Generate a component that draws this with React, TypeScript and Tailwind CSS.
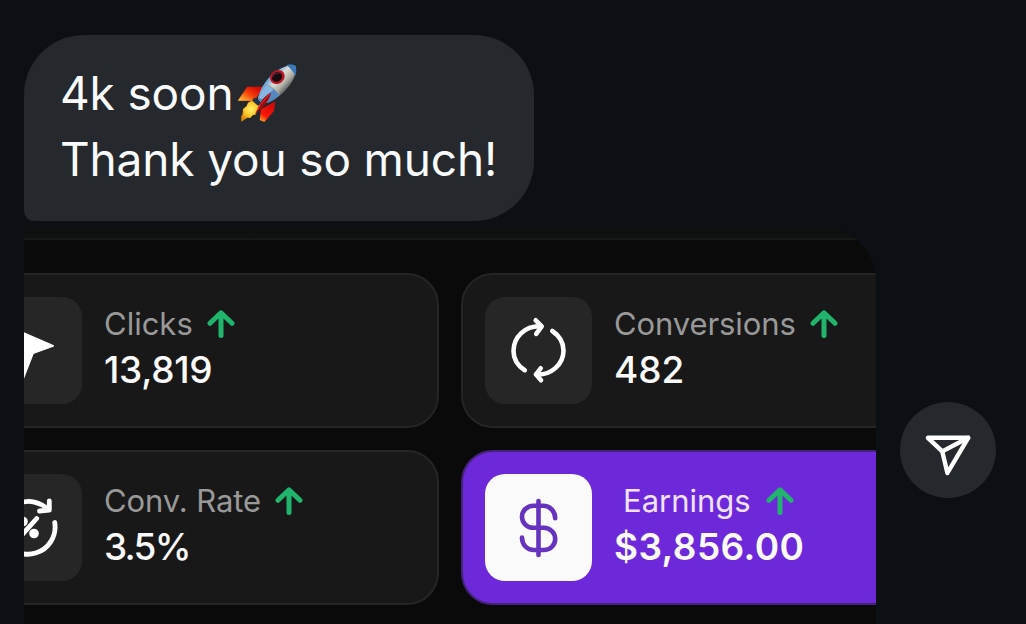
import type { ReactNode } from "react";
import clsx from "clsx";

type StatCardProps = {
  label: string;
  value: string;
  icon: ReactNode;
  labelClass?: string;
  valueClass?: string;
  highlight?: boolean;
};

const ArrowUp = () => (
  <svg width="28" height="28" viewBox="0 0 28 28" fill="none" className="shrink-0">
    <path
      d="M14 25.5V3M3 13.3L14 2.8L25 13.3"
      stroke="#20b46c"
      strokeWidth="5"
      strokeLinecap="round"
      strokeLinejoin="round"
    />
  </svg>
);

const CursorIcon = () => (
  <svg width="107" height="107" viewBox="0 0 107 107">
    <path
      d="M30 28L78 48.8L58 56L47 84Z"
      fill="#fff"
      stroke="#fff"
      strokeWidth="2"
      strokeLinejoin="round"
    />
  </svg>
);

const ConversionIcon = () => (
  <svg
    width="107"
    height="107"
    viewBox="0 0 107 107"
    fill="none"
    stroke="#fff"
    strokeWidth="4.6"
    strokeLinecap="round"
    strokeLinejoin="round"
  >
    <path d="M56 29.3C40 28.5 28.5 40 28.5 54C28.5 62 33 69 39.8 73.2" />
    <path d="M50.7 23.3L56.7 29.3L51.2 36.8" />
    <path d="M67.3 34C74 38.5 78.5 45.5 78.5 53.5C78.5 67.5 66 78.5 51 77.5" />
    <path d="M55.7 71.3L51 77.3L56 83.3" />
  </svg>
);

const RateIcon = () => (
  <svg
    width="107"
    height="107"
    viewBox="0 0 107 107"
    fill="none"
    stroke="#fff"
    strokeWidth="4.8"
    strokeLinecap="round"
    strokeLinejoin="round"
  >
    <path d="M26.5 53.5A27.2 27.2 0 0 1 73 35.5" />
    <path d="M74.3 27V36.2L64.5 37" />
    <path d="M79.7 48.5A27.2 27.2 0 0 1 28 64" />
    <path d="M61.7 44.5L45.5 62.5" />
    <circle cx="59" cy="59.5" r="4.8" fill="#fff" stroke="none" />
    <circle cx="48" cy="47.5" r="4.8" fill="#fff" stroke="none" />
  </svg>
);

const DollarIcon = () => (
  <svg
    width="107"
    height="107"
    viewBox="0 0 107 107"
    fill="none"
    stroke="#6633bf"
    strokeWidth="4.6"
    strokeLinecap="round"
  >
    <path d="M53.5 27V81" />
    <path d="M70.2 44.3C70.2 37 64.8 31.8 58 31.8H48.5C42 31.8 37 36.6 37 42.7C37 48.8 42 53.8 48.5 53.8H58.7C65.2 53.8 70.2 58.8 70.2 65C70.2 71.2 65.2 76 58.7 76H49C42 76 37 70.8 37 63.5" />
  </svg>
);

const SendIcon = () => (
  <svg
    width="48"
    height="48"
    viewBox="0 0 48 48"
    fill="none"
    stroke="#fff"
    strokeWidth="4.4"
    strokeLinejoin="round"
    strokeLinecap="round"
    className="overflow-visible"
  >
    <path d="M3.9 11.8H44.2L23.4 47L18.3 25.4Z" />
    <path d="M18.3 25.4L44.2 11.8" />
  </svg>
);

const Rocket = () => (
  <svg width="60" height="58" viewBox="36 27 180 174" className="shrink-0">
    <defs>
      <linearGradient id="body" x1="116" y1="62" x2="172" y2="114" gradientUnits="userSpaceOnUse">
        <stop offset="0" stopColor="#356da8" />
        <stop offset="0.3" stopColor="#82b4e0" />
        <stop offset="0.5" stopColor="#dcdcd5" />
        <stop offset="0.78" stopColor="#b3b2a9" />
        <stop offset="1" stopColor="#65686a" />
      </linearGradient>
      <linearGradient id="fin" x1="88" y1="96" x2="58" y2="142" gradientUnits="userSpaceOnUse">
        <stop offset="0" stopColor="#d90c05" />
        <stop offset="0.45" stopColor="#f53d08" />
        <stop offset="1" stopColor="#ffb52e" />
      </linearGradient>
      <linearGradient id="finRight" x1="145" y1="145" x2="110" y2="198" gradientUnits="userSpaceOnUse">
        <stop offset="0" stopColor="#c90909" />
        <stop offset="0.7" stopColor="#fb1607" />
        <stop offset="1" stopColor="#f99a20" />
      </linearGradient>
      <radialGradient id="flame" cx="78" cy="163" r="36" gradientUnits="userSpaceOnUse">
        <stop offset="0" stopColor="#fff36b" />
        <stop offset="0.55" stopColor="#fbc72b" />
        <stop offset="1" stopColor="#d98208" />
      </radialGradient>
    </defs>
    <path d="M67 95L116 95L88 138L38 137Z" fill="url(#fin)" />
    <path d="M108 163L151 139L147 168L118 201L104 195Z" fill="url(#finRight)" />
    <path
      d="M80 137L103 146L106 157L91 179L84 180L76 189L67 188L49 200L48 185L53 177L54 162L65 153L69 143Z"
      fill="url(#flame)"
    />
    <path d="M88 127L109 145L99 152L82 137Z" fill="#20324b" />
    <path
      d="M212 33C216 52 205 82 184 103C167 122 141 142 120 145C109 144 100 137 99 130C106 98 127 68 154 48C175 34 194 28 212 33Z"
      fill="url(#body)"
    />
    <path d="M184 30C199 27 209 29 212 33C215 41 214 54 211 63C206 51 197 39 184 30Z" fill="#3979ba" />
    <path d="M125 87C138 93 154 105 165 119C151 132 134 143 120 145C109 144 100 137 99 130C104 114 113 98 125 87Z" fill="#5487bd" />
    <path d="M124 90C139 94 154 105 163 117" fill="none" stroke="#c7bd9a" strokeWidth="3" />
    <path d="M123 91C132 94 140 99 145 104L112 132L101 130C105 115 114 101 123 91Z" fill="#86b6e2" />
    <path d="M139 113C127 118 115 129 107 142L90 178L112 158C122 148 132 134 139 113Z" fill="#9e0c12" />
    <path d="M134 117L105 150L98 166" fill="none" stroke="#e5342d" strokeWidth="3" />
    <ellipse cx="157" cy="66" rx="23" ry="20" transform="rotate(-35 157 66)" fill="#ba1427" />
    <ellipse cx="156" cy="66" rx="16" ry="14" transform="rotate(-35 156 66)" fill="#160b0e" />
    <path d="M143 67C145 58 153 53 163 54" fill="none" stroke="#603239" strokeWidth="3" />
  </svg>
);

const StatCard = ({ label, value, icon, labelClass, valueClass, highlight }: StatCardProps) => (
  <div
    className={clsx(
      "flex items-center gap-[22px] rounded-[32px] border-2 pl-[22px]",
      highlight ? "border-[#432477] bg-[#6d28d9]" : "border-[#252525] bg-[#181818]"
    )}
  >
    <div
      className={clsx(
        "size-[107px] shrink-0 overflow-hidden rounded-[20px]",
        highlight ? "bg-[#fafafa]" : "bg-[#262626]"
      )}
    >
      {icon}
    </div>
    <div className="pb-[7px] leading-[46px] whitespace-nowrap">
      <div className={clsx("flex items-center gap-[14px] text-[31px]", highlight ? "text-[#f1e3ff]" : "text-[#999]")}>
        <span className={labelClass}>{label}</span>
        <ArrowUp />
      </div>
      <p className="text-[37px] font-medium text-[#fafafa]">
        <span className={valueClass}>{value}</span>
      </p>
    </div>
  </div>
);

export default function App() {
  return (
    <main className="flex h-[624px] w-[1026px] flex-col overflow-hidden bg-[#0c1014] pl-6 pt-[35px] font-['Inter',sans-serif]">
      {/* Message bubble */}
      <div className="h-[186px] w-[510px] shrink-0 rounded-[60px] rounded-bl-[10px] bg-[#25282d] pt-[25px] pl-9 text-[46px] leading-[66px] tracking-[-0.15px] whitespace-nowrap text-[#f8fafb]">
        <div className="flex h-[66px] items-center">
          <span>4k soon</span>
          <span className="ml-1">
            <Rocket />
          </span>
        </div>
        <p>Thank you so much!</p>
      </div>

      {/* Attached dashboard */}
      <div className="mt-[5px] flex gap-6">
        <div className="h-[398px] w-[852px] overflow-hidden rounded-tr-[56px] bg-[#0a0a0a]">
          <div className="h-[14px] border-b-2 border-[#171918] bg-linear-to-b from-[#0c1012] to-[#101211]" />
          <div className="mt-[33px] -ml-[73px] grid w-[998px] grid-cols-[488px_488px] grid-rows-[155px_155px] gap-x-[22px] gap-y-[22px]">
            <StatCard label="Clicks" value="13,819" icon={<CursorIcon />} valueClass="tracking-[-0.3px]" />
            <StatCard label="Conversions" value="482" icon={<ConversionIcon />} labelClass="tracking-[-0.1px]" />
            <StatCard
              label="Conv. Rate"
              value="3.5%"
              icon={<RateIcon />}
              labelClass="tracking-[-0.1px]"
              valueClass="tracking-[-1.8px]"
            />
            <StatCard
              label="Earnings"
              value="$3,856.00"
              icon={<DollarIcon />}
              labelClass="ml-[9px] mr-px"
              valueClass="font-semibold tracking-[0.4px]"
              highlight
            />
          </div>
        </div>
        <button
          aria-label="Share"
          className="mt-44 flex size-24 items-center justify-center rounded-full bg-[#25282d]"
        >
          <SendIcon />
        </button>
      </div>
    </main>
  );
}
